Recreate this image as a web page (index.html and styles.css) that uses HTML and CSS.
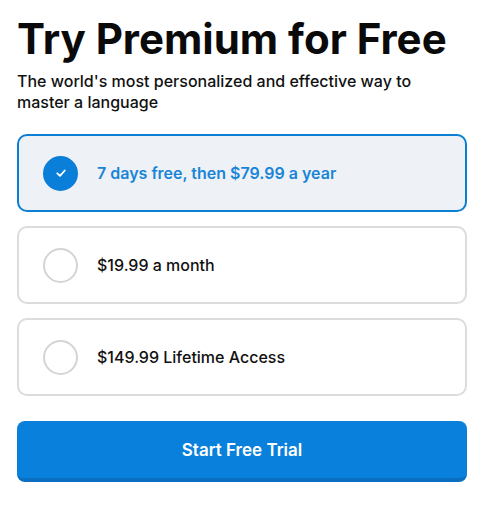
FILE: index.html
```html
<!DOCTYPE html>
<html lang="en">

<head>
    <meta charset="UTF-8">
    <meta name="viewport" content="width=device-width, initial-scale=1.0">
    <title>Try Premium for Free</title>
    <link rel="stylesheet" href="styles.css">
</head>

<body>
    <div class="container">
        <h1>Try Premium for Free</h1>
        <p class="subtitle">The world's most personalized and effective way to master a language</p>

        <div class="plans">
            <div class="plan selected">
                <span class="radio">
                    <svg width="14" height="14" viewBox="0 0 14 14">
                        <path d="M3.3 7.3 L6 9.9 L10.8 4.5" fill="none" stroke="#fff" stroke-width="1.8" stroke-linecap="round" stroke-linejoin="round"/>
                    </svg>
                </span>
                <span class="plan-label">7 days free, then $79.99 a year</span>
            </div>
            <div class="plan">
                <span class="radio"></span>
                <span class="plan-label">$19.99 a month</span>
            </div>
            <div class="plan">
                <span class="radio"></span>
                <span class="plan-label">$149.99 Lifetime Access</span>
            </div>
        </div>

        <button class="start-btn">Start Free Trial</button>
    </div>
</body>

</html>
```

FILE: styles.css
```css
body {
    font-family: Inter, 'Noto Sans', sans-serif;
    margin: 0;
    background-color: #ffffff;
    color: #111111;
}

.container {
    padding: 14px 15px 20px 17px;
}

h1 {
    font-size: 42px;
    font-weight: 700;
    line-height: 50px;
    margin: 0;
    color: #0a0a0a;
}

.subtitle {
    font-size: 16px;
    font-weight: 500;
    line-height: 21px;
    margin: 7px 0 0;
    max-width: 420px;
}

.plans {
    display: flex;
    flex-direction: column;
    gap: 14px;
    margin-top: 21px;
}

.plan {
    display: flex;
    align-items: center;
    gap: 19px;
    height: 74px;
    padding: 0 24px;
    border: 2px solid #dcdcdc;
    border-radius: 10px;
    background-color: #ffffff;
}

.plan.selected {
    border-color: #0b7fd4;
    background-color: #eef2f7;
}

.radio {
    display: flex;
    align-items: center;
    justify-content: center;
    width: 31px;
    height: 31px;
    border: 2px solid #d4d4d4;
    border-radius: 50%;
    flex-shrink: 0;
}

.plan.selected .radio {
    border-color: #0a7fd9;
    background-color: #0a7fd9;
}

.plan-label {
    font-size: 16px;
    font-weight: 500;
    color: #111111;
}

.plan.selected .plan-label {
    color: #1a85d6;
    font-weight: 600;
}

.start-btn {
    display: block;
    width: 100%;
    height: 61px;
    margin-top: 25px;
    border: none;
    border-bottom: 4px solid #0a6fc0;
    border-radius: 8px;
    background-color: #0a80dd;
    color: #ffffff;
    font-family: inherit;
    font-size: 17px;
    font-weight: 600;
    cursor: pointer;
}
```
